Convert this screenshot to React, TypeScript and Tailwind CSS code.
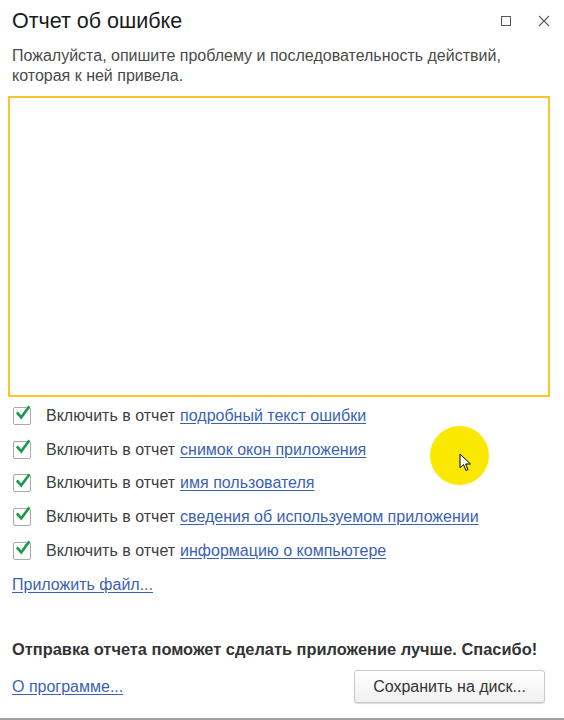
const rows = [
  "подробный текст ошибки",
  "снимок окон приложения",
  "имя пользователя",
  "сведения об используемом приложении",
  "информацию о компьютере",
];

function CheckBox() {
  return (
    <div className="flex h-[18px] w-[18px] shrink-0 items-center justify-center rounded-[2px] border border-[#a9a9a9] bg-white">
      <svg width="16" height="16" viewBox="0 0 16 16" className="-mt-[5px] ml-[2px]">
        <path d="M2 8.5 L6 13 L14.5 1.5" fill="none" stroke="#1d9a4b" strokeWidth="3" strokeLinecap="square" />
      </svg>
    </div>
  );
}

export default function App() {
  return (
    <div
      className="relative flex h-[720px] w-[564px] flex-col bg-white text-[#404040]"
      style={{ fontFamily: '"Liberation Sans", Arial, sans-serif' }}
    >
      <div className="flex h-[42px] items-center pl-3 pr-[14px]">
        <div className="flex-1 text-[21.5px] text-[#1a1a1a]">Отчет об ошибке</div>
        <div className="mr-[27px] h-[10px] w-[10px] border border-[#555]" />
        <svg width="12" height="12" viewBox="0 0 12 12">
          <path d="M1 1 L11 11 M11 1 L1 11" stroke="#666" strokeWidth="1.3" />
        </svg>
      </div>
      <div className="px-3 pt-[4px] text-[16px] leading-[20px] text-[#4a4a4a]">
        Пожалуйста, опишите проблему и последовательность действий,
        <br />
        которая к ней привела.
      </div>
      <div className="ml-2 mr-[14px] mt-[10px] h-[301px] border-2 border-[#fbc52c] bg-white" />
      <div className="flex flex-col pl-[13px] pt-[2px]">
        {rows.map((r) => (
          <div key={r} className="flex h-[33.7px] items-center text-[16px]">
            <CheckBox />
            <span className="ml-[15px] text-[#404040]">Включить в отчет</span>
            <a className="ml-[5px] text-[#3a62b4] underline underline-offset-2">{r}</a>
          </div>
        ))}
      </div>
      <a className="ml-3 mt-[6px] w-fit text-[16px] text-[#3a62b4] underline underline-offset-2">Приложить файл...</a>
      <div className="ml-3 mt-[40px] text-[16.4px] font-bold text-[#333]">
        Отправка отчета поможет сделать приложение лучше. Спасибо!
      </div>
      <div className="mt-[8px] flex items-center pl-3 pr-[19px]">
        <a className="flex-1 text-[16px] text-[#3a62b4] underline underline-offset-2">О программе...</a>
        <button className="h-[33px] w-[191px] rounded-[3px] border border-[#c8c8c8] bg-gradient-to-b from-white to-[#f0f0f0] text-[16px] text-[#333] shadow-[0_1px_1px_rgba(0,0,0,0.15)]">
          Сохранить на диск...
        </button>
      </div>
      <div className="absolute bottom-0 left-0 h-[2px] w-full bg-[#a0a0a0]" />
      <div className="absolute left-[430px] top-[426px] h-[59px] w-[59px] rounded-full bg-[#fbe800]" />
      <svg className="absolute left-[459px] top-[453px]" width="14" height="20" viewBox="0 0 14 20">
        <path d="M1 1 L1 15 L4.5 11.5 L7 17.5 L9 16.5 L6.6 11 L11.5 11 Z" fill="white" stroke="black" strokeWidth="1" strokeLinejoin="round" />
      </svg>
    </div>
  );
}
